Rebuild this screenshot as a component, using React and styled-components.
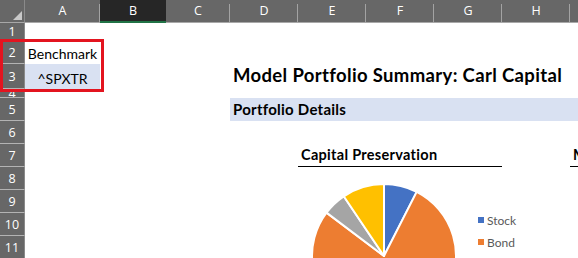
import React from 'react'
import styled, { createGlobalStyle } from 'styled-components'

const GlobalStyle = createGlobalStyle`
  html, body { margin: 0; padding: 0; background: #fff; overflow: hidden; }
  body { font-family: Lato, "Open Sans", sans-serif; }
`

const COLS = ['A', 'B', 'C', 'D', 'E', 'F', 'G', 'H', 'I']
const COL_WIDTHS = [75, 66, 64, 68, 68, 68, 68, 68, 68]
const ROW_HEIGHTS = [18, 23, 25, 9, 23, 23, 23, 23, 23, 23, 23]

const Sheet = styled.div`
  position: relative;
  width: 578px;
  height: 258px;
  overflow: hidden;
`

const Grid = styled.div`
  display: grid;
  grid-template-columns: 25px ${COL_WIDTHS.map(w => `${w}px`).join(' ')};
  grid-template-rows: 23px ${ROW_HEIGHTS.map(h => `${h}px`).join(' ')};
`

const Corner = styled.div`
  grid-column: 1;
  grid-row: 1;
  background: #676767;
  border-bottom: 1px solid #a8a8a8;
  border-right: 1px solid #8a8a8a;
  box-sizing: border-box;
  display: flex;
  align-items: flex-end;
  justify-content: flex-end;
  padding: 0 2px 2px 0;
`

const ColHead = styled.div`
  grid-row: 1;
  box-sizing: border-box;
  display: flex;
  align-items: center;
  justify-content: center;
  font-family: "Open Sans", sans-serif;
  font-size: 12.5px;
  color: #fff;
  padding-bottom: 1px;
  background: ${p => p.$active
    ? '#262626'
    : 'linear-gradient(#a3a3a3, #a3a3a3) right 4px / 1px calc(100% - 4px) no-repeat, #676767'};
  border-bottom: ${p => p.$active ? '2px solid #217346' : '1px solid #a8a8a8'};
`

const RowHead = styled.div`
  grid-column: 1;
  box-sizing: border-box;
  display: flex;
  align-items: center;
  justify-content: center;
  background: #676767;
  border-bottom: 1px solid #b3b3b3;
  border-right: 1px solid #8a8a8a;
  font-family: "Open Sans", sans-serif;
  font-size: 12.5px;
  color: #fff;
  overflow: hidden;
`

const Cell = styled.div`
  grid-column: ${p => p.$col};
  grid-row: ${p => p.$row};
  display: flex;
  align-items: flex-end;
  justify-content: ${p => p.$center ? 'center' : 'flex-start'};
  padding: 0 3px 2px;
  white-space: nowrap;
  font-size: 14px;
  color: #000;
  background: ${p => p.$fill || 'transparent'};
  min-width: 0;
`

const Title = styled(Cell)`
  font-size: 18.5px;
  font-weight: 700;
  letter-spacing: 0.35px;
  padding-bottom: 3px;
`

const SectionBand = styled(Cell)`
  font-size: 15px;
  font-weight: 700;
  letter-spacing: 0.25px;
  align-items: center;
  padding-top: 1px;
`

const ChartTitle = styled(Cell)`
  font-size: 14.5px;
  font-weight: 700;
  letter-spacing: 0.3px;
  border-bottom: 1.5px solid #000;
  padding-bottom: 3px;
`

const ChartBox = styled.div`
  grid-column: 6 / 9;
  grid-row: 9 / 13;
  display: flex;
  align-items: flex-start;
`

const Legend = styled.div`
  display: flex;
  flex-direction: column;
  padding-top: 42px;
  font-size: 12px;
  color: #595959;
`

const LegendItem = styled.div`
  display: flex;
  align-items: center;
  gap: 3px;
  height: 22px;
`

const Swatch = styled.span`
  width: 6px;
  height: 6px;
  background: ${p => p.$color};
`

const Highlight = styled.div`
  position: absolute;
  left: 0;
  top: 39px;
  width: 104px;
  height: 53px;
  box-sizing: border-box;
  border: 3px solid #e3141f;
  pointer-events: none;
`

const SLICES = [
  { label: 'Stock', color: '#4472C4', from: 0, to: 27 },
  { label: 'Bond', color: '#ED7D31', from: 27, to: 307 },
  { label: 'Other', color: '#A5A5A5', from: 307, to: 326 },
  { label: 'Cash', color: '#FFC000', from: 326, to: 360 },
]

const pt = (cx, cy, r, deg) => {
  const a = (deg * Math.PI) / 180
  return [cx + r * Math.sin(a), cy - r * Math.cos(a)]
}

const slicePath = (cx, cy, r, from, to) => {
  const [x1, y1] = pt(cx, cy, r, from)
  const [x2, y2] = pt(cx, cy, r, to)
  const large = to - from > 180 ? 1 : 0
  return `M${cx},${cy} L${x1.toFixed(2)},${y1.toFixed(2)} A${r},${r} 0 ${large} 1 ${x2.toFixed(2)},${y2.toFixed(2)} Z`
}

function Pie() {
  return (
    <svg width="180" height="92" style={{ overflow: 'visible', flexShrink: 0 }}>
      {SLICES.map(s => (
        <path key={s.label} d={slicePath(86, 89, 72, s.from, s.to)}
          fill={s.color} stroke="#fff" strokeWidth="2" strokeLinejoin="round" />
      ))}
    </svg>
  )
}

export default function App() {
  return (
    <Sheet>
      <GlobalStyle />
      <Grid>
        <Corner>
          <svg width="9" height="9" viewBox="0 0 9 9">
            <polygon points="0,9 9,0 9,9" fill="#c9c9c9" />
          </svg>
        </Corner>
        {COLS.map((c, i) => (
          <ColHead key={c} style={{ gridColumn: i + 2 }} $active={c === 'B'}>{c}</ColHead>
        ))}
        {ROW_HEIGHTS.map((_, i) => (
          <RowHead key={i} style={{ gridRow: i + 2 }}>{i + 1}</RowHead>
        ))}

        <Cell $col={2} $row={3} $center>Benchmark</Cell>
        <Cell $col={2} $row={4} $center $fill="#D9E1F2">^SPXTR</Cell>

        <Title $col="5 / 11" $row={4}>Model Portfolio Summary: Carl Capital</Title>
        <SectionBand $col="5 / 11" $row={6} $fill="#D9E1F2">Portfolio Details</SectionBand>

        <ChartTitle $col="6 / 9" $row={8}>Capital Preservation</ChartTitle>
        <ChartTitle $col="10 / 11" $row={8}>Moderate</ChartTitle>

        <ChartBox>
          <Pie />
          <Legend>
            <LegendItem><Swatch $color="#4472C4" />Stock</LegendItem>
            <LegendItem><Swatch $color="#ED7D31" />Bond</LegendItem>
          </Legend>
        </ChartBox>
      </Grid>
      <Highlight />
    </Sheet>
  )
}
